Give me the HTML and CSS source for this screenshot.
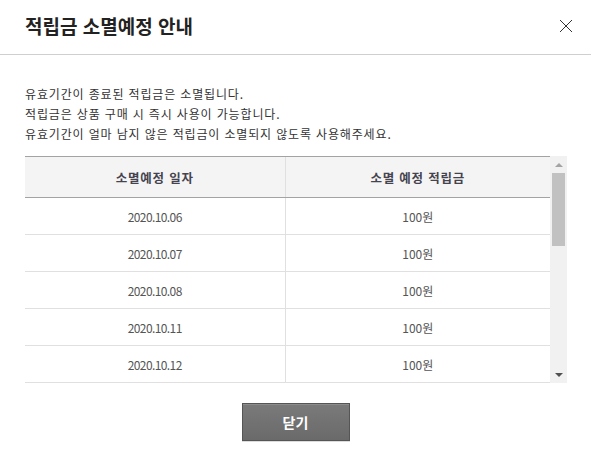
FILE: index.html
```html
<!DOCTYPE html>
<html lang="ko">
<head>
<meta charset="utf-8">
<link rel="stylesheet" href="styles.css">
</head>
<body>
<div class="modal">
  <div class="modal-head">
    <h1 class="modal-title">적립금 소멸예정 안내</h1>
    <button class="close-btn" aria-label="닫기">
      <svg width="14" height="14" viewBox="0 0 14 14"><path d="M1 1L13 13M13 1L1 13" stroke="#333" stroke-width="1" fill="none"/></svg>
    </button>
  </div>
  <div class="modal-body">
    <p class="notice">유효기간이 종료된 적립금은 소멸됩니다.<br>적립금은 상품 구매 시 즉시 사용이 가능합니다.<br>유효기간이 얼마 남지 않은 적립금이 소멸되지 않도록 사용해주세요.</p>
    <div class="table-wrap">
      <div class="table-view">
        <table class="point-table">
          <thead>
            <tr><th>소멸예정 일자</th><th>소멸 예정 적립금</th></tr>
          </thead>
          <tbody>
            <tr><td class="date">2020.10.06</td><td>100원</td></tr>
            <tr><td class="date">2020.10.07</td><td>100원</td></tr>
            <tr><td class="date">2020.10.08</td><td>100원</td></tr>
            <tr><td class="date">2020.10.11</td><td>100원</td></tr>
            <tr><td class="date">2020.10.12</td><td>100원</td></tr>
          </tbody>
        </table>
      </div>
      <div class="scrollbar" aria-hidden="true">
        <div class="sb-btn"><svg width="8" height="4" viewBox="0 0 8 4"><path d="M0 4L4 0L8 4Z" fill="#a3a3a3"/></svg></div>
        <div class="sb-track"><div class="sb-thumb"></div></div>
        <div class="sb-btn"><svg width="8" height="4" viewBox="0 0 8 4"><path d="M0 0L8 0L4 4Z" fill="#505050"/></svg></div>
      </div>
    </div>
    <div class="actions">
      <button class="btn-close">닫기</button>
    </div>
  </div>
</div>
</body>
</html>
```

FILE: styles.css
```css
* { box-sizing: border-box; }
html, body { margin: 0; padding: 0; background: #fff; }
body {
  font-family: "Noto Sans CJK KR", "Noto Sans", sans-serif;
  color: #333;
  width: 591px;
  height: 468px;
  overflow: hidden;
}
.modal { width: 591px; }
.modal-head {
  height: 55px;
  border-bottom: 1px solid #cfcfcf;
  display: flex;
  align-items: center;
  justify-content: space-between;
  padding: 0 18px 4px 25px;
}
.modal-title {
  margin: 0;
  font-size: 19px;
  font-weight: 700;
  color: #222;
  letter-spacing: 0;
}
.close-btn {
  border: 0;
  background: none;
  padding: 0;
  width: 14px;
  height: 14px;
  display: block;
  margin-top: 2px;
}
.close-btn svg { display: block; }
.modal-body { padding: 29px 24px 0 25px; }
.notice {
  margin: 0;
  font-size: 12px;
  line-height: 20px;
  color: #333;
  letter-spacing: 0.85px;
}
.table-wrap {
  margin-top: 12px;
  width: 542px;
  height: 227px;
  display: flex;
}
.table-view {
  width: 525px;
  height: 227px;
  overflow: hidden;
}
.scrollbar {
  width: 17px;
  height: 227px;
  background: #f1f1f1;
  display: flex;
  flex-direction: column;
}
.sb-btn {
  height: 17px;
  display: flex;
  align-items: center;
  justify-content: center;
}
.sb-btn svg { display: block; }
.sb-track {
  flex: 1;
  padding: 0 2px;
}
.sb-thumb {
  height: 73px;
  background: #c1c1c1;
}
.point-table {
  width: 525px;
  border-collapse: collapse;
  table-layout: fixed;
  font-size: 12px;
}
.point-table th:first-child, .point-table td:first-child { width: 260px; }
.point-table thead th {
  height: 41px;
  background: #f4f4f4;
  border-top: 1px solid #a3a3a3;
  border-bottom: 1px solid #a3a3a3;
  font-weight: 700;
  color: #45434f;
  font-size: 12.5px;
  letter-spacing: 0.8px;
  padding: 0;
}
.point-table th + th, .point-table td + td { border-left: 1px solid #e0e0e0; }
.point-table td {
  height: 37px;
  text-align: center;
  color: #555;
  border-bottom: 1px solid #e0e0e0;
  padding: 0;
}
.point-table td.date { letter-spacing: -0.6px; }
.actions {
  display: flex;
  justify-content: center;
  padding-top: 20px;
  padding-right: 1px;
}
.btn-close {
  width: 108px;
  height: 38px;
  border: 1px solid #555;
  background: linear-gradient(#7a7a7a, #6a6a6a);
  box-shadow: inset 0 1px 0 #8c8c8c, 0 1px 0 #dcdcdc;
  color: #fff;
  font-family: "Noto Sans CJK KR", sans-serif;
  font-size: 14px;
  font-weight: 700;
  padding: 0;
}
```
